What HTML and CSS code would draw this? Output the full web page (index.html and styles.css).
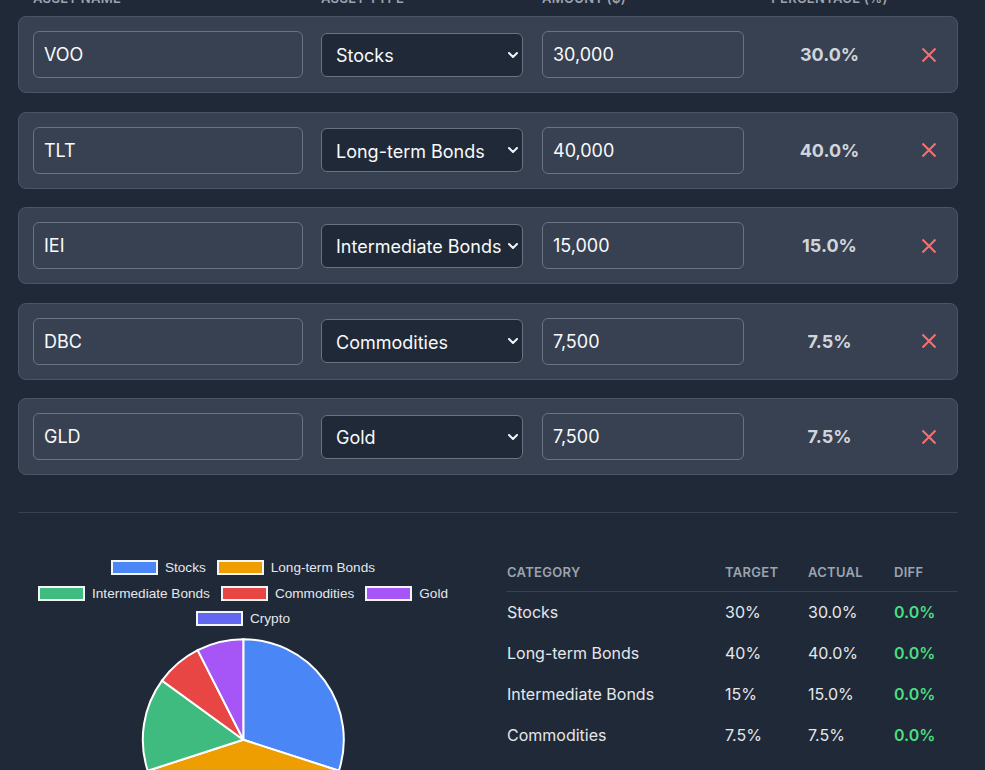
FILE: index.html
```html
<!DOCTYPE html>
<html lang="en">
<head>
<meta charset="utf-8">
<title>Portfolio Allocation</title>
<link rel="stylesheet" href="styles.css">
</head>
<body>
<div class="page">
  <div class="col-headers">
    <span>Asset Name</span>
    <span>Asset Type</span>
    <span>Amount ($)</span>
    <span class="center">Percentage (%)</span>
    <span></span>
  </div>

  <div class="rows">
    <div class="asset-row">
      <input class="field" type="text" value="VOO">
      <div class="select-wrap">
        <select class="type-select"><option selected>Stocks</option><option>Long-term Bonds</option><option>Intermediate Bonds</option><option>Commodities</option><option>Gold</option><option>Crypto</option></select>
        <svg class="chevron" width="10" height="6" viewBox="0 0 10 6"><path d="M1 1l4 4 4-4" fill="none" stroke="#f3f4f6" stroke-width="2" stroke-linecap="round" stroke-linejoin="round"/></svg>
      </div>
      <input class="field" type="text" value="30,000">
      <div class="pct">30.0%</div>
      <button class="remove" aria-label="Remove"><svg width="16" height="16" viewBox="0 0 16 16"><path d="M1.5 1.5l13 13M14.5 1.5l-13 13" stroke="#f87171" stroke-width="2" fill="none"/></svg></button>
    </div>

    <div class="asset-row">
      <input class="field" type="text" value="TLT">
      <div class="select-wrap">
        <select class="type-select"><option>Stocks</option><option selected>Long-term Bonds</option><option>Intermediate Bonds</option><option>Commodities</option><option>Gold</option><option>Crypto</option></select>
        <svg class="chevron" width="10" height="6" viewBox="0 0 10 6"><path d="M1 1l4 4 4-4" fill="none" stroke="#f3f4f6" stroke-width="2" stroke-linecap="round" stroke-linejoin="round"/></svg>
      </div>
      <input class="field" type="text" value="40,000">
      <div class="pct">40.0%</div>
      <button class="remove" aria-label="Remove"><svg width="16" height="16" viewBox="0 0 16 16"><path d="M1.5 1.5l13 13M14.5 1.5l-13 13" stroke="#f87171" stroke-width="2" fill="none"/></svg></button>
    </div>

    <div class="asset-row">
      <input class="field" type="text" value="IEI">
      <div class="select-wrap">
        <select class="type-select"><option>Stocks</option><option>Long-term Bonds</option><option selected>Intermediate Bonds</option><option>Commodities</option><option>Gold</option><option>Crypto</option></select>
        <svg class="chevron" width="10" height="6" viewBox="0 0 10 6"><path d="M1 1l4 4 4-4" fill="none" stroke="#f3f4f6" stroke-width="2" stroke-linecap="round" stroke-linejoin="round"/></svg>
      </div>
      <input class="field" type="text" value="15,000">
      <div class="pct">15.0%</div>
      <button class="remove" aria-label="Remove"><svg width="16" height="16" viewBox="0 0 16 16"><path d="M1.5 1.5l13 13M14.5 1.5l-13 13" stroke="#f87171" stroke-width="2" fill="none"/></svg></button>
    </div>

    <div class="asset-row">
      <input class="field" type="text" value="DBC">
      <div class="select-wrap">
        <select class="type-select"><option>Stocks</option><option>Long-term Bonds</option><option>Intermediate Bonds</option><option selected>Commodities</option><option>Gold</option><option>Crypto</option></select>
        <svg class="chevron" width="10" height="6" viewBox="0 0 10 6"><path d="M1 1l4 4 4-4" fill="none" stroke="#f3f4f6" stroke-width="2" stroke-linecap="round" stroke-linejoin="round"/></svg>
      </div>
      <input class="field" type="text" value="7,500">
      <div class="pct">7.5%</div>
      <button class="remove" aria-label="Remove"><svg width="16" height="16" viewBox="0 0 16 16"><path d="M1.5 1.5l13 13M14.5 1.5l-13 13" stroke="#f87171" stroke-width="2" fill="none"/></svg></button>
    </div>

    <div class="asset-row">
      <input class="field" type="text" value="GLD">
      <div class="select-wrap">
        <select class="type-select"><option>Stocks</option><option>Long-term Bonds</option><option>Intermediate Bonds</option><option>Commodities</option><option selected>Gold</option><option>Crypto</option></select>
        <svg class="chevron" width="10" height="6" viewBox="0 0 10 6"><path d="M1 1l4 4 4-4" fill="none" stroke="#f3f4f6" stroke-width="2" stroke-linecap="round" stroke-linejoin="round"/></svg>
      </div>
      <input class="field" type="text" value="7,500">
      <div class="pct">7.5%</div>
      <button class="remove" aria-label="Remove"><svg width="16" height="16" viewBox="0 0 16 16"><path d="M1.5 1.5l13 13M14.5 1.5l-13 13" stroke="#f87171" stroke-width="2" fill="none"/></svg></button>
    </div>
  </div>

  <section class="results">
    <div class="chart">
      <div class="legend">
        <div class="legend-row">
          <span class="legend-item"><i class="swatch sw-stocks"></i>Stocks</span>
          <span class="legend-item"><i class="swatch sw-ltb"></i>Long-term Bonds</span>
        </div>
        <div class="legend-row">
          <span class="legend-item"><i class="swatch sw-itb"></i>Intermediate Bonds</span>
          <span class="legend-item"><i class="swatch sw-comm"></i>Commodities</span>
          <span class="legend-item"><i class="swatch sw-gold"></i>Gold</span>
        </div>
        <div class="legend-row">
          <span class="legend-item"><i class="swatch sw-crypto"></i>Crypto</span>
        </div>
      </div>
      <svg class="pie" width="450" height="220" viewBox="0 0 450 220">
        <g stroke="#ffffff" stroke-width="2">
          <path fill="#4a86f5" d="M225.3 109.7 L225.3 9.2 A100.5 100.5 0 0 1 320.88 140.76 Z"/>
          <path fill="#ee9e00" d="M225.3 109.7 L320.88 140.76 A100.5 100.5 0 0 1 129.72 140.76 Z"/>
          <path fill="#40bb7f" d="M225.3 109.7 L129.72 140.76 A100.5 100.5 0 0 1 143.99 50.63 Z"/>
          <path fill="#e84545" d="M225.3 109.7 L143.99 50.63 A100.5 100.5 0 0 1 179.67 20.15 Z"/>
          <path fill="#a655f6" d="M225.3 109.7 L179.67 20.15 A100.5 100.5 0 0 1 225.3 9.2 Z"/>
        </g>
      </svg>
    </div>

    <table class="compare">
      <colgroup>
        <col class="c-cat"><col class="c-target"><col class="c-actual"><col class="c-diff">
      </colgroup>
      <thead>
        <tr><th>Category</th><th>Target</th><th>Actual</th><th>Diff</th></tr>
      </thead>
      <tbody>
        <tr><td>Stocks</td><td>30%</td><td>30.0%</td><td class="diff">0.0%</td></tr>
        <tr><td>Long-term Bonds</td><td>40%</td><td>40.0%</td><td class="diff">0.0%</td></tr>
        <tr><td>Intermediate Bonds</td><td>15%</td><td>15.0%</td><td class="diff">0.0%</td></tr>
        <tr><td>Commodities</td><td>7.5%</td><td>7.5%</td><td class="diff">0.0%</td></tr>
        <tr><td>Gold</td><td>7.5%</td><td>7.5%</td><td class="diff">0.0%</td></tr>
      </tbody>
    </table>
  </section>
</div>
</body>
</html>
```

FILE: styles.css
```css
html, body {
  overflow: hidden;
}

body {
  margin: 0;
  background: #1f2937;
  color: #f3f4f6;
  font-family: Inter, "Noto Sans", sans-serif;
}

.page {
  width: 940px;
  margin: -12px 0 0 18px;
}

.col-headers,
.asset-row {
  display: grid;
  grid-template-columns: 270px 203px 202px 1fr 28px;
  column-gap: 18px;
  align-items: center;
}

.col-headers {
  padding: 0 15px;
  margin-bottom: 8px;
  font-size: 13px;
  line-height: 20px;
  font-weight: 600;
  letter-spacing: 0.3px;
  text-transform: uppercase;
  color: #9ca3af;
}

.col-headers .center {
  text-align: center;
}

.rows {
  display: flex;
  flex-direction: column;
  gap: 18.5px;
}

.asset-row {
  background: #374151;
  border: 1px solid #4b5563;
  border-radius: 8px;
  padding: 14px;
}

.field {
  box-sizing: border-box;
  height: 47px;
  width: 100%;
  margin: 0;
  padding: 0 10px;
  background: #374151;
  border: 1px solid #6b7280;
  border-radius: 6px;
  color: #f9fafb;
  font-family: Inter, "Noto Sans", sans-serif;
  font-size: 18px;
  outline: none;
}

.select-wrap {
  position: relative;
  width: 202px;
}

.type-select {
  box-sizing: border-box;
  -webkit-appearance: none;
  appearance: none;
  display: block;
  width: 100%;
  height: 44px;
  margin: 0;
  padding: 2px 0 0 14px;
  background: #1f2937;
  border: 1px solid #6b7280;
  border-radius: 6px;
  color: #f9fafb;
  font-family: Inter, "Noto Sans", sans-serif;
  font-size: 18px;
  outline: none;
}

.chevron {
  position: absolute;
  right: 5px;
  top: 19px;
  pointer-events: none;
}

.pct {
  text-align: center;
  font-size: 18px;
  font-weight: 700;
  color: #d1d5db;
}

.remove {
  display: flex;
  align-items: center;
  justify-content: center;
  padding: 0;
  height: 28px;
  background: none;
  border: none;
}

.results {
  margin-top: 37px;
  border-top: 1px solid #374151;
  padding-top: 41px;
  display: grid;
  grid-template-columns: 450px 1fr;
  column-gap: 38px;
  align-items: start;
}

.chart {
  display: flex;
  flex-direction: column;
  align-items: center;
}

.legend {
  width: 100%;
  padding-top: 1px;
  font-family: "Liberation Sans", Arial, sans-serif;
  font-size: 13.6px;
  color: #e5e7eb;
}

.legend-row {
  height: 25.5px;
  display: flex;
  justify-content: center;
  align-items: center;
  gap: 11px;
}

.legend-item {
  display: flex;
  align-items: center;
  gap: 7px;
  white-space: nowrap;
}

.swatch {
  box-sizing: border-box;
  display: block;
  width: 47px;
  height: 15px;
  border: 2px solid #f3f4f6;
}

.sw-stocks { background: #4a86f5; }
.sw-ltb { background: #ee9e00; }
.sw-itb { background: #40bb7f; }
.sw-comm { background: #e84545; }
.sw-gold { background: #a655f6; }
.sw-crypto { background: #6366f1; }

.pie {
  display: block;
  margin-top: -2px;
}

.compare {
  width: 100%;
  border-collapse: collapse;
  table-layout: fixed;
}

.c-cat { width: 218px; }
.c-target { width: 83px; }
.c-actual { width: 86px; }
.c-diff { width: auto; }

.compare th {
  text-align: left;
  padding: 8px 0 9px 1px;
  line-height: 20px;
  font-size: 13px;
  font-weight: 600;
  letter-spacing: 0.3px;
  text-transform: uppercase;
  color: #9ca3af;
  border-bottom: 1px solid #374151;
}

.compare td {
  padding: 10px 0 10px 1px;
  line-height: 21px;
  font-size: 16px;
  color: #e5e7eb;
}

.compare td.diff {
  color: #4ade80;
  font-weight: 600;
}
```
